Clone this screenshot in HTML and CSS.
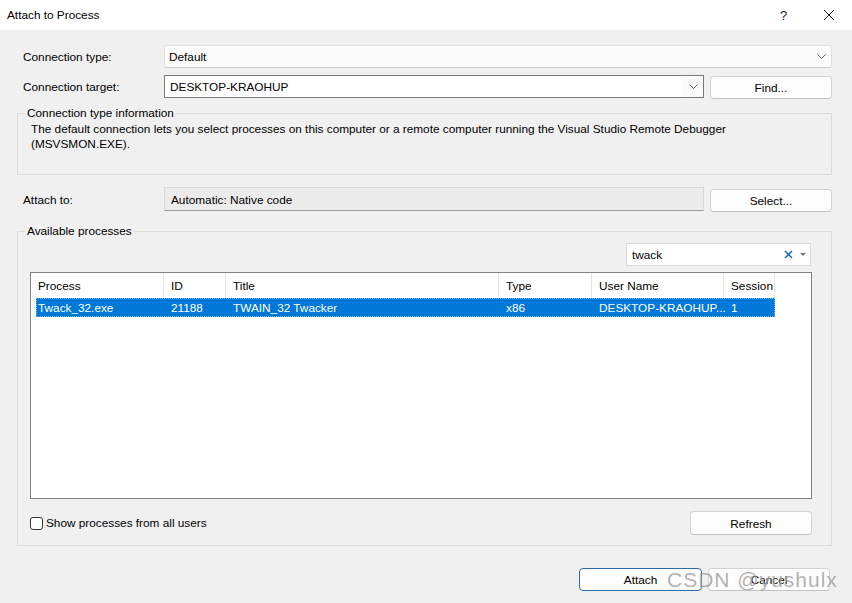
FILE: index.html
```html
<!DOCTYPE html>
<html>
<head>
<meta charset="utf-8">
<link rel="stylesheet" href="styles.css">
</head>
<body>
<div class="window">
  <div class="titlebar">
    <span class="title">Attach to Process</span>
    <span class="help">?</span>
    <span class="close"><svg width="12" height="12" viewBox="0 0 12 12"><path d="M1 1 L11 11 M11 1 L1 11" stroke="#1a1a1a" stroke-width="1" fill="none"/></svg></span>
  </div>
  <div class="content">
    <div class="row">
      <span class="label">Connection type:</span>
      <div class="combo combo-flat">
        <span class="combo-text">Default</span>
        <svg class="chev" width="9" height="5" viewBox="0 0 9 5"><path d="M0.5 0.5 L4.5 4.5 L8.5 0.5" stroke="#606060" fill="none"/></svg>
      </div>
    </div>
    <div class="row row2">
      <span class="label">Connection target:</span>
      <div class="combo combo-edit">
        <span class="combo-text">DESKTOP-KRAOHUP</span>
        <span class="chev-area"><svg width="9" height="5" viewBox="0 0 9 5"><path d="M0.5 0.5 L4.5 4.5 L8.5 0.5" stroke="#606060" fill="none"/></svg></span>
      </div>
      <button class="btn side">Find...</button>
    </div>

    <fieldset class="group group1">
      <legend>Connection type information</legend>
      <p class="info">The default connection lets you select processes on this computer or a remote computer running the Visual Studio Remote Debugger (MSVSMON.EXE).</p>
    </fieldset>

    <div class="row row3">
      <span class="label">Attach to:</span>
      <div class="readonly">Automatic: Native code</div>
      <button class="btn side">Select...</button>
    </div>

    <fieldset class="group group2">
      <legend>Available processes</legend>
      <div class="search-row">
        <div class="search">
          <span class="search-text">twack</span>
          <span class="clear"><svg width="9" height="9" viewBox="0 0 9 9"><path d="M1 1 L8 8 M8 1 L1 8" stroke="#1c6fc2" stroke-width="1.6" fill="none"/></svg></span>
          <span class="drop"><svg width="6" height="4" viewBox="0 0 6 4"><path d="M0 0 L6 0 L3 3 Z" fill="#777"/></svg></span>
        </div>
      </div>
      <div class="list">
        <div class="list-head">
          <div class="hcell">Process</div>
          <div class="hcell">ID</div>
          <div class="hcell">Title</div>
          <div class="hcell">Type</div>
          <div class="hcell">User Name</div>
          <div class="hcell">Session</div>
        </div>
        <div class="list-row selected">
          <div class="cell first">Twack_32.exe</div>
          <div class="cell">21188</div>
          <div class="cell">TWAIN_32 Twacker</div>
          <div class="cell">x86</div>
          <div class="cell">DESKTOP-KRAOHUP...</div>
          <div class="cell">1</div>
        </div>
      </div>
      <div class="bottom-row">
        <label class="check"><span class="box"></span><span>Show processes from all users</span></label>
        <button class="btn refresh">Refresh</button>
      </div>
    </fieldset>

    <div class="actions">
      <button class="btn default">Attach</button>
      <button class="btn">Cancel</button>
    </div>
  </div>
  <div class="watermark">CSDN @yushulx</div>
</div>
</body>
</html>
```

FILE: styles.css
```css
html, body {
  margin: 0;
  padding: 0;
}
body {
  width: 852px;
  height: 603px;
  overflow: hidden;
  background: #f0f0f0;
  font-family: "Liberation Sans", Arial, sans-serif;
  font-size: 11.8px;
  color: #000;
}
.window {
  position: relative;
  width: 852px;
  height: 603px;
  background: #f0f0f0;
}
.titlebar {
  height: 30px;
  background: #ffffff;
  display: flex;
  align-items: center;
  padding-left: 7px;
}
.title {
  flex: 1;
  font-size: 11.8px;
  color: #000;
}
.help {
  width: 14px;
  font-size: 13px;
  color: #1a1a1a;
  margin-right: 29px;
}
.close {
  display: flex;
  align-items: center;
  margin-right: 17px;
}
.content {
  padding: 15px 20px 0 17px;
}
.row {
  display: flex;
  align-items: center;
  padding-left: 6px;
  height: 23px;
}
.row2 {
  margin-top: 7px;
}
.label {
  width: 141px;
  flex: none;
  padding-top: 1px;
}
.combo {
  flex: 1;
  height: 23px;
  box-sizing: border-box;
  display: flex;
  align-items: center;
}
.combo-flat {
  background: #fbfbfb;
  border: 1px solid #e2e2e2;
  border-bottom-color: #cdcdcd;
  border-radius: 3px;
  padding-left: 4px;
  padding-right: 4px;
}
.combo-text {
  flex: 1;
  padding-top: 1px;
}
.combo-flat .chev {
  margin-right: 1px;
}
.combo-edit {
  background: #ffffff;
  border: 1px solid #7a7a7a;
  padding-left: 5px;
}
.chev-area {
  width: 20px;
  height: 21px;
  background: #fafafa;
  display: flex;
  align-items: center;
  justify-content: center;
}
.btn {
  font-family: "Liberation Sans", Arial, sans-serif;
  font-size: 11.8px;
  color: #000;
  background: #fdfdfd;
  border: 1px solid #d3d3d3;
  border-bottom-color: #c2c2c2;
  border-radius: 4px;
  height: 23px;
  padding: 1px 0 0 0;
  box-sizing: border-box;
}
.side {
  width: 122px;
  margin-left: 6px;
  flex: none;
}
.row2 .side {
  margin-top: 2px;
}
.group {
  margin: 0;
  padding: 0;
  border: 1px solid #dcdcdc;
  min-width: 0;
}
.group legend {
  padding: 0 2px;
  line-height: 15px;
  font-size: 11.8px;
}
.group1 {
  margin-top: 8px;
  padding: 0 13px 22px 13px;
}
.group1 legend {
  margin-left: -6px;
}
.info {
  margin: 0;
  padding-top: 1px;
  line-height: 15px;
  padding-right: 60px;
}
.row3 {
  margin-top: 12px;
  height: 24px;
}
.readonly {
  flex: 1;
  height: 24px;
  box-sizing: border-box;
  background: #ececec;
  border: 1px solid #dadada;
  border-bottom: 1px solid #9a9a9a;
  display: flex;
  align-items: center;
  padding-left: 6px;
  padding-top: 1px;
}
.row3 .side {
  margin-top: 3px;
}
.group2 {
  margin-top: 13px;
  padding: 0 19px 10px 12px;
}
.group2 legend {
  margin-left: -5px;
}
.search-row {
  display: flex;
  justify-content: flex-end;
  margin-top: 4px;
  padding-right: 1px;
}
.search {
  width: 185px;
  height: 23px;
  box-sizing: border-box;
  background: #fff;
  border: 1px solid #d9d9d9;
  display: flex;
  align-items: center;
  padding-left: 5px;
}
.search-text {
  flex: 1;
  padding-top: 1px;
}
.clear {
  display: flex;
  margin-right: 7px;
}
.drop {
  display: flex;
  margin-right: 4px;
}
.list {
  margin-top: 6px;
  height: 227px;
  box-sizing: border-box;
  background: #ffffff;
  border: 1px solid #828282;
}
.list-head {
  display: grid;
  grid-template-columns: 133px 62px 273px 93px 132px 51px;
  height: 25px;
}
.hcell {
  border-right: 1px solid #e5e5e5;
  padding-left: 7px;
  padding-top: 1px;
  display: flex;
  align-items: center;
  white-space: nowrap;
  overflow: hidden;
}
.list-row {
  display: grid;
  grid-template-columns: 128px 62px 273px 93px 132px 51px;
  height: 19px;
  margin-left: 5px;
  width: 739px;
}
.selected {
  background: #0078d7;
  color: #ffffff;
  outline: 1px dotted #7fb6e6;
  outline-offset: -1px;
}
.cell {
  padding-left: 7px;
  padding-top: 1px;
  display: flex;
  align-items: center;
  white-space: nowrap;
}
.cell.first {
  padding-left: 2px;
}
.bottom-row {
  margin-top: 12px;
  display: flex;
  align-items: center;
  justify-content: space-between;
  height: 24px;
}
.check {
  display: flex;
  align-items: center;
}
.box {
  width: 13px;
  height: 13px;
  box-sizing: border-box;
  border: 1px solid #333;
  border-radius: 3px;
  background: #fff;
  margin-right: 3px;
}
.refresh {
  width: 122px;
  height: 24px;
}
.actions {
  margin-top: 22px;
  display: flex;
  justify-content: flex-end;
  gap: 6px;
  padding-right: 2px;
}
.actions .btn {
  width: 122px;
}
.actions .default {
  width: 123px;
  border: 1px solid #2a6aa8;
}
.watermark {
  position: absolute;
  left: 667px;
  top: 568px;
  font-family: "Liberation Sans", Arial, sans-serif;
  font-size: 21px;
  color: rgba(110, 110, 110, 0.55);
  letter-spacing: 1px;
  text-shadow: 0 0 1px rgba(255,255,255,0.6);
  pointer-events: none;
}
```
